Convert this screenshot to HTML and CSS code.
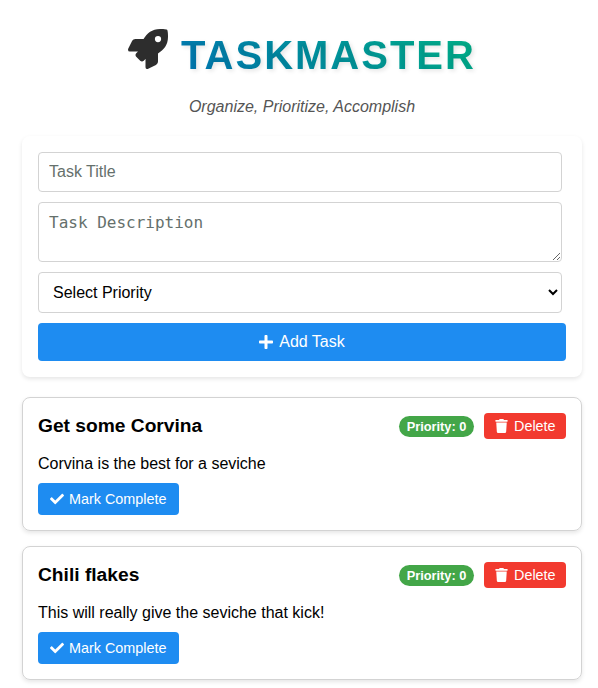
FILE: index.html
```
<!DOCTYPE html>
<html lang="en">
<head>
<meta charset="utf-8">
<title>TaskMaster</title>
<link rel="stylesheet" href="styles.css">
</head>
<body>
<svg class="symbols" aria-hidden="true">
  <symbol id="check" viewBox="0 0 512 512"><path d="M173.898 439.404l-166.4-166.4c-9.997-9.997-9.997-26.206 0-36.204l36.203-36.204c9.997-9.998 26.207-9.998 36.204 0L192 312.69 432.095 72.596c9.997-9.997 26.207-9.997 36.204 0l36.203 36.204c9.997 9.997 9.997 26.206 0 36.204l-294.4 294.401c-9.998 9.997-26.207 9.997-36.204-.001z"/></symbol>
  <symbol id="trash" viewBox="0 0 448 512"><path d="M432 32H312l-9.400-18.700A24 24 0 0 0 281.100 0H166.800a23.720 23.720 0 0 0-21.400 13.300L136 32H16A16 16 0 0 0 0 48v32a16 16 0 0 0 16 16h416a16 16 0 0 0 16-16V48a16 16 0 0 0-16-16zM53.200 467a48 48 0 0 0 47.900 45h245.800a48 48 0 0 0 47.900-45L416 128H32z"/></symbol>
</svg>
<header class="header">
  <div class="brand">
    <svg class="rocket" viewBox="0 0 512 512"><path d="M505.120 19.094c-1.189-5.531-6.658-11-12.207-12.188C460.716 0 435.507 0 410.407 0 307.175 0 245.269 55.203 199.052 128H94.838c-16.348.016-35.557 11.875-42.887 26.484L2.516 253.297A28.400 28.400 0 0 0 0 264a24.009 24.009 0 0 0 24.006 24h103.810l-22.474 22.469c-11.365 11.361-12.996 32.258 0 45.250l50.904 50.906c11.156 11.188 32.156 13.156 45.277 0l22.475-22.469V488a24.009 24.009 0 0 0 24.006 24 28.559 28.559 0 0 0 10.707-2.516l98.728-49.390c14.629-7.297 26.508-26.500 26.508-42.860V312.797c72.597-46.313 128.035-108.407 128.035-211.094.093-25.203.093-50.406-6.862-82.609zM384.040 168A40 40 0 1 1 424.050 128a40.023 40.023 0 0 1-40.010 40z"/></svg>
    <h1 class="title">TASKMASTER</h1>
  </div>
  <p class="tagline">Organize, Prioritize, Accomplish</p>
</header>
<main>
  <form class="task-form">
    <input class="field" type="text" placeholder="Task Title">
    <textarea class="field area" placeholder="Task Description"></textarea>
    <select class="field select"><option>Select Priority</option></select>
    <button class="add" type="button"><svg class="plus" viewBox="0 0 448 512"><path d="M416 208H272V64c0-17.670-14.330-32-32-32h-32c-17.670 0-32 14.330-32 32v144H32c-17.670 0-32 14.330-32 32v32c0 17.670 14.330 32 32 32h144v144c0 17.670 14.330 32 32 32h32c17.670 0 32-14.330 32-32V304h144c17.670 0 32-14.330 32-32v-32c0-17.670-14.330-32-32-32z"/></svg>Add Task</button>
  </form>
  <article class="card">
    <div class="card-head">
      <h3 class="card-title">Get some Corvina</h3>
      <span class="badge">Priority: 0</span>
      <button class="delete" type="button"><svg class="trash"><use href="#trash"/></svg>Delete</button>
    </div>
    <p class="text">Corvina is the best for a seviche</p>
    <button class="complete" type="button"><svg class="check"><use href="#check"/></svg>Mark Complete</button>
  </article>
  <article class="card">
    <div class="card-head">
      <h3 class="card-title">Chili flakes</h3>
      <span class="badge">Priority: 0</span>
      <button class="delete" type="button"><svg class="trash"><use href="#trash"/></svg>Delete</button>
    </div>
    <p class="text">This will really give the seviche that kick!</p>
    <button class="complete" type="button"><svg class="check"><use href="#check"/></svg>Mark Complete</button>
  </article>
</main>
</body>
</html>
```
FILE: styles.css
```
* { box-sizing: border-box; }
html { overflow: hidden; }
body {
  margin: 0;
  min-height: 688px;
  padding: 29px 16px 8px 22px;
  background: #fff;
  color: #000;
  font: 16px/18px "Liberation Sans", Arial, sans-serif;
}
svg { fill: currentColor; flex: none; }
.symbols { display: none; }
.header { height: 107px; }
.brand { display: flex; justify-content: center; height: 49px; }
.rocket { width: 40px; height: 40px; margin-right: 13px; color: #2d2d2d; }
.title {
  margin: 3px 0 0;
  font-size: 40px;
  line-height: 46px;
  letter-spacing: 2px;
  background: linear-gradient(45deg, #0077b6, #00b48a);
  -webkit-background-clip: text;
  background-clip: text;
  -webkit-text-fill-color: transparent;
  text-shadow: 2px 2px 4px rgba(0, 0, 0, .1);
}
.tagline { margin: 20px 0 0; text-align: center; font-style: italic; color: #555; }
.task-form {
  display: flex;
  flex-direction: column;
  gap: 10px;
  height: 241px;
  padding: 16px;
  border-radius: 8px;
  box-shadow: 0 2px 4px rgba(0, 0, 0, .1);
}
.field {
  width: 524px;
  height: 40px;
  margin: 0;
  padding: 10px;
  border: 1px solid #d3d3d3;
  border-radius: 4px;
  background: #fff;
  color: #000;
  font: 16px "Liberation Sans", Arial, sans-serif;
}
.field::placeholder { color: #65706c; }
.area { height: 60px; font-family: "DejaVu Sans Mono", monospace; }
.select { height: 41px; }
button {
  display: flex;
  align-items: center;
  border: 0;
  border-radius: 4px;
  color: #fff;
  background: #1e8cf1;
  font: 14.4px "Liberation Sans", Arial, sans-serif;
}
.add { justify-content: center; height: 38px; font-size: 16px; }
.plus { width: 14px; height: 16px; margin-right: 6px; }
.card {
  height: 134px;
  margin-top: 20px;
  padding: 15px;
  border: 1px solid #d3d3d3;
  border-radius: 8px;
  box-shadow: 0 2px 4px rgba(0, 0, 0, .1);
}
.card + .card { margin-top: 15px; }
.card-head { display: flex; align-items: center; height: 26px; }
.card-title { flex: 1; margin: 0; font-size: 19.2px; line-height: 22px; }
.badge {
  width: 75px;
  height: 21px;
  border-radius: 11px;
  background: #43a648;
  color: #fff;
  font-size: 12.8px;
  font-weight: bold;
  line-height: 21px;
  text-align: center;
}
.delete { width: 82px; height: 26px; margin-left: 10px; padding: 0 0 0 11px; background: #f23a2f; }
.trash { width: 13px; height: 14px; margin-right: 6px; }
.text { margin: 16px 0 10px; }
.complete { width: 141px; height: 32px; padding: 0 0 0 12px; }
.check { width: 14px; height: 14px; margin-right: 5px; }
```
